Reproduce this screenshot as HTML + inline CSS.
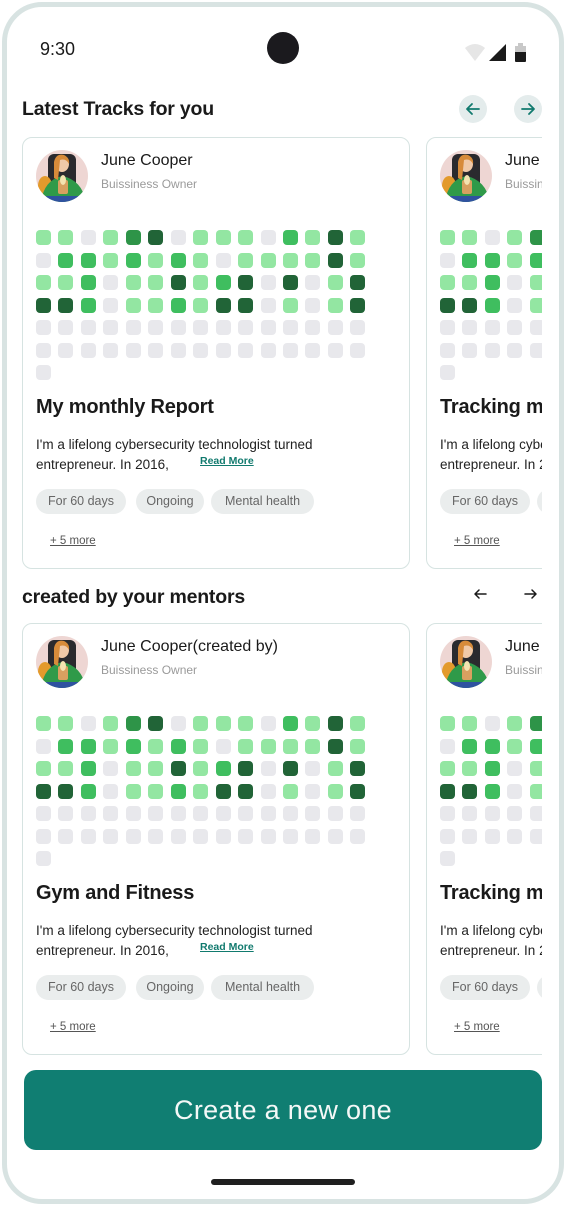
<!DOCTYPE html>
<html><head><meta charset="utf-8">
<style>
*{margin:0;padding:0;box-sizing:border-box}
body{width:567px;height:1207px;background:#fff;font-family:"Liberation Sans",sans-serif;position:relative;overflow:hidden}
.frame{position:absolute;left:2px;top:2px;width:562px;height:1202px;border:5px solid #d8e3e2;border-radius:40px;background:#fff}
.clip{position:absolute;left:0;top:0;width:542px;height:1207px;overflow:hidden}
.abs{position:absolute}
.card{position:absolute;width:388px;height:432px;border:1.5px solid #d6e3e1;border-radius:10px;background:#fff}
.av{position:absolute;left:13px;top:12px;width:52px;height:52px}
.name{position:absolute;left:78px;top:14px;font-size:16px;color:#1a1a1a;white-space:nowrap}
.sub{position:absolute;left:78px;top:39px;font-size:12px;color:#9a9a9a;white-space:nowrap}
.grid{position:absolute;left:13px;top:92px;width:340px}
.cell{position:absolute;width:15px;height:15px;border-radius:4px}
.title{position:absolute;left:13px;top:258px;font-size:20px;font-weight:bold;color:#1a1a1a;white-space:nowrap;letter-spacing:-0.2px}
.desc{position:absolute;left:13px;top:297px;font-size:13.5px;line-height:20px;color:#222;white-space:nowrap}
.rm{position:absolute;left:177px;top:317px;font-size:10.5px;font-weight:bold;color:#117a6e;text-decoration:underline;white-space:nowrap}
.chip{position:absolute;top:351px;height:25px;border-radius:13px;background:#eaeded;font-size:12.5px;color:#666;line-height:25px;text-align:center;white-space:nowrap}
.more{position:absolute;left:27px;top:397px;font-size:11.5px;color:#555;text-decoration:underline;white-space:nowrap}
h2{position:absolute;left:22px;font-size:19.5px;font-weight:bold;color:#1a1a1a;white-space:nowrap;letter-spacing:-0.2px}
.circ{position:absolute;width:28px;height:28px;border-radius:50%;background:#e4ecec}
</style></head><body>
<div class="frame"></div>
<div class="abs" style="left:40px;top:39px;font-size:18px;color:#1a1a1a">9:30</div>
<div class="abs" style="left:267px;top:32px;width:32px;height:32px;border-radius:50%;background:#1b1a1e"></div>
<svg class="abs" style="left:464px;top:42px" width="66" height="22" viewBox="0 0 66 22">
<path d="M1 6 Q11 -2 21 6 L11 19 Z" fill="#e6e6e6"/>
<path d="M25 19 L42 2 L42 19 Z" fill="#1a1a1a"/>
<rect x="51" y="4" width="11" height="16" rx="1" fill="#1a1a1a"/><rect x="51" y="4" width="11" height="6" fill="#c8c8c8"/><rect x="54" y="1" width="5" height="3" fill="#c8c8c8"/>
</svg>

<div class="clip">
<h2 style="top:98px">Latest Tracks for you</h2>
<div class="circ" style="left:459px;top:95px"></div>
<div class="circ" style="left:514px;top:95px"></div>
<svg class="abs" style="left:459px;top:95px" width="90" height="28"><g fill="none" stroke="#117a6e" stroke-width="1.8" stroke-linecap="round" stroke-linejoin="round"><path d="M20 14H8M13 9L8 14L13 19"/><path d="M63 14H75M70 9L75 14L70 19"/></g></svg>

<h2 style="top:586px">created by your mentors</h2>
<svg class="abs" style="left:470px;top:584px" width="72" height="20"><g fill="none" stroke="#1a1a1a" stroke-width="1.5" stroke-linecap="round" stroke-linejoin="round"><path d="M16 10H5M9 6L5 10L9 14"/><path d="M55 10H66M62 6L66 10L62 14"/></g></svg>

<div class="card" style="left:22px;top:137px">
<svg class="av"><use href="#avatar"/></svg>
<div class="name">June Cooper</div><div class="sub">Buissiness Owner</div>
<div class="grid"></div>
<div class="title">My monthly Report</div>
<div class="desc">I'm a lifelong cybersecurity technologist turned<br>entrepreneur. In 2016,</div>
<div class="rm">Read More</div>
<div class="chip" style="left:13px;width:90px">For 60 days</div>
<div class="chip" style="left:113px;width:68px">Ongoing</div>
<div class="chip" style="left:188px;width:103px">Mental health</div>
<div class="more">+ 5 more</div>
</div>
<div class="card" style="left:426px;top:137px">
<svg class="av"><use href="#avatar"/></svg>
<div class="name">June Cooper</div><div class="sub">Buissiness Owner</div>
<div class="grid"></div>
<div class="title">Tracking my progress</div>
<div class="desc">I'm a lifelong cybersecurity technologist turned<br>entrepreneur. In 2016,</div>
<div class="chip" style="left:13px;width:90px">For 60 days</div>
<div class="chip" style="left:110px;width:68px">Ongoing</div>
<div class="more">+ 5 more</div>
</div>

<div class="card" style="left:22px;top:623px">
<svg class="av"><use href="#avatar"/></svg>
<div class="name">June Cooper(created by)</div><div class="sub">Buissiness Owner</div>
<div class="grid"></div>
<div class="title">Gym and Fitness</div>
<div class="desc">I'm a lifelong cybersecurity technologist turned<br>entrepreneur. In 2016,</div>
<div class="rm">Read More</div>
<div class="chip" style="left:13px;width:90px">For 60 days</div>
<div class="chip" style="left:113px;width:68px">Ongoing</div>
<div class="chip" style="left:188px;width:103px">Mental health</div>
<div class="more">+ 5 more</div>
</div>
<div class="card" style="left:426px;top:623px">
<svg class="av"><use href="#avatar"/></svg>
<div class="name">June Cooper</div><div class="sub">Buissiness Owner</div>
<div class="grid"></div>
<div class="title">Tracking my progress</div>
<div class="desc">I'm a lifelong cybersecurity technologist turned<br>entrepreneur. In 2016,</div>
<div class="chip" style="left:13px;width:90px">For 60 days</div>
<div class="chip" style="left:110px;width:68px">Ongoing</div>
<div class="more">+ 5 more</div>
</div>
</div>

<div class="abs" style="left:24px;top:1070px;width:518px;height:80px;border-radius:12px;background:#107e72;color:#f4f8f7;font-size:27px;line-height:80px;text-align:center;letter-spacing:0.3px">Create a new one</div>
<div class="abs" style="left:211px;top:1179px;width:144px;height:6px;border-radius:3px;background:#1f1f1f"></div>

<svg width="0" height="0" style="position:absolute"><defs>
<g id="avatar">
<circle cx="26" cy="26" r="26" fill="#eed6d3"/>
<clipPath id="cc"><circle cx="26" cy="26" r="26"/></clipPath>
<g clip-path="url(#cc)">
<rect x="12" y="4" width="28" height="40" rx="6" fill="#2a2a2e"/>
<ellipse cx="9" cy="36" rx="7" ry="10" fill="#e39a2c"/>
<path d="M5 52 Q8 30 26 26 Q46 30 50 52 Z" fill="#2f9a49"/>
<ellipse cx="26" cy="14" rx="7" ry="8" fill="#f0c9a8"/>
<path d="M18 12 Q20 3 28 5 Q34 8 33 14 Q30 8 24 10 L22 30 L18 28 Z" fill="#d78b3a"/>
<rect x="22" y="30" width="10" height="14" rx="2" fill="#d8a060"/>
<ellipse cx="27" cy="30" rx="3" ry="5" fill="#f4e3b0"/>
<rect x="10" y="46" width="32" height="8" fill="#2f52a0"/>
</g></g></defs></svg>

<script>
var rows=["llglDdglllgmldl","gmmlmlmlgllllDl".replace('D','d'),"llmglldlmdgdgld","ddmgllmlddglgld"];
var col={l:"#93e6a2",m:"#3fbe5f",d:"#216437",D:"#2e9448",g:"#e8e8ec"};
document.querySelectorAll('.grid').forEach(function(g){
 var h='';
 for(var r=0;r<7;r++){for(var c=0;c<15;c++){
  if(r==6&&c>0)break;
  var k=r<4?rows[r][c]:'g';
  h+='<div class="cell" style="left:'+(c*22.45)+'px;top:'+(r*22.5)+'px;background:'+col[k]+'"></div>';
 }}
 g.innerHTML=h;
});
</script>
</body></html>
